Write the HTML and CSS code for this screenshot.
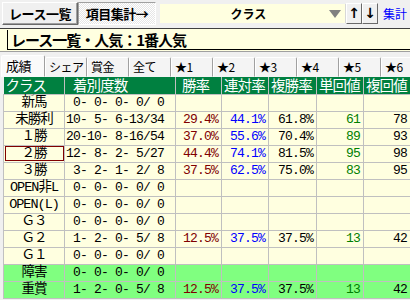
FILE: index.html
```html
<!DOCTYPE html>
<html lang="ja">
<head>
    <meta charset="UTF-8">
    <title>レース一覧</title>
    <link rel="stylesheet" href="styles.css">
</head>
<body>
    <div class="toolbar">
        <button class="btn">レース一覧</button>
        <button class="btn pressed">項目集計→</button>
        <div class="combo">
            <span class="combo-text">クラス</span>
            <svg class="combo-arrow" width="12" height="8" viewBox="0 0 12 8"><path d="M0 0H12L6 8Z" fill="#808080"/></svg>
        </div>
        <button class="arrow">↑</button>
        <button class="arrow">↓</button>
        <span class="link">集計</span>
    </div>

    <div class="title">
        <span class="title-box">レース一覧・人気：1番人気</span>
    </div>

    <div class="tabs">
        <div class="tab active">成績</div>
        <div class="tab">シェア</div>
        <div class="tab">賞金</div>
        <div class="tab">全て</div>
        <div class="tab">★1</div>
        <div class="tab">★2</div>
        <div class="tab">★3</div>
        <div class="tab">★4</div>
        <div class="tab">★5</div>
        <div class="tab">★6</div>
    </div>

    <table class="grid">
        <colgroup>
            <col style="width:61px"><col style="width:111px"><col style="width:46px"><col style="width:47px"><col style="width:48px"><col style="width:47px"><col style="width:47px">
        </colgroup>
        <thead>
            <tr>
                <th>クラス</th>
                <th class="ind8">着別度数</th>
                <th class="ind6">勝率</th>
                <th>連対率</th>
                <th>複勝率</th>
                <th>単回値</th>
                <th>複回値</th>
            </tr>
        </thead>
        <tbody>
            <tr><td class="cls">新馬</td><td class="cnt"> 0- 0- 0- 0/ 0</td><td></td><td></td><td></td><td></td><td></td></tr>
            <tr><td class="cls">未勝利</td><td class="cnt">10- 5- 6-13/34</td><td class="win">29.4%</td><td class="ren">44.1%</td><td class="num">61.8%</td><td class="tan">61</td><td class="num">78</td></tr>
            <tr><td class="cls">１勝</td><td class="cnt">20-10- 8-16/54</td><td class="win">37.0%</td><td class="ren">55.6%</td><td class="num">70.4%</td><td class="tan">89</td><td class="num">93</td></tr>
            <tr><td class="cls sel">２勝</td><td class="cnt">12- 8- 2- 5/27</td><td class="win">44.4%</td><td class="ren">74.1%</td><td class="num">81.5%</td><td class="tan">95</td><td class="num">98</td></tr>
            <tr><td class="cls">３勝</td><td class="cnt"> 3- 2- 1- 2/ 8</td><td class="win">37.5%</td><td class="ren">62.5%</td><td class="num">75.0%</td><td class="tan">83</td><td class="num">95</td></tr>
            <tr><td class="cls">OPEN非L</td><td class="cnt"> 0- 0- 0- 0/ 0</td><td></td><td></td><td></td><td></td><td></td></tr>
            <tr><td class="cls">OPEN(L)</td><td class="cnt"> 0- 0- 0- 0/ 0</td><td></td><td></td><td></td><td></td><td></td></tr>
            <tr><td class="cls">Ｇ３</td><td class="cnt"> 0- 0- 0- 0/ 0</td><td></td><td></td><td></td><td></td><td></td></tr>
            <tr><td class="cls">Ｇ２</td><td class="cnt"> 1- 2- 0- 5/ 8</td><td class="win">12.5%</td><td class="ren">37.5%</td><td class="num">37.5%</td><td class="tan">13</td><td class="num">42</td></tr>
            <tr><td class="cls">Ｇ１</td><td class="cnt"> 0- 0- 0- 0/ 0</td><td></td><td></td><td></td><td></td><td></td></tr>
            <tr class="green"><td class="cls">障害</td><td class="cnt"> 0- 0- 0- 0/ 0</td><td></td><td></td><td></td><td></td><td></td></tr>
            <tr class="green"><td class="cls">重賞</td><td class="cnt"> 1- 2- 0- 5/ 8</td><td class="win">12.5%</td><td class="ren">37.5%</td><td class="num">37.5%</td><td class="tan">13</td><td class="num">42</td></tr>
        </tbody>
    </table>
</body>
</html>
```

FILE: styles.css
```css
/* Reset */
* {
    box-sizing: border-box;
    margin: 0;
    padding: 0;
}

body {
    width: 410px;
    height: 300px;
    overflow: hidden;
    background-color: #f0f0f0;
    font-family: "Liberation Mono", "Noto Sans CJK JP", monospace;
    color: #000;
}

/* Toolbar */
.toolbar {
    display: flex;
    align-items: center;
    height: 27px;
    padding-left: 2px;
}

.btn {
    height: 23px;
    width: 76px;
    font-family: "Noto Sans CJK JP", sans-serif;
    font-size: 13px;
    font-weight: bold;
    line-height: 19px;
    background-color: #f0f0f0;
    border: 1px solid;
    border-color: #fff #696969 #696969 #fff;
    box-shadow: inset -1px -1px 0 #a0a0a0;
    letter-spacing: -0.5px;
}

.btn.pressed {
    width: 78px;
    background-color: #fff;
    background-image: repeating-conic-gradient(#e6e6e6 0 25%, #fff 0 50%);
    background-size: 2px 2px;
    border-color: #a0a0a0 #fff #fff #a0a0a0;
    box-shadow: none;
}

.combo {
    display: flex;
    align-items: center;
    width: 186px;
    height: 19px;
    margin-left: 4px;
    background-color: #ffffe0;
    border-right: 1px solid #d8d8d8;
}

.combo-text {
    flex: 1;
    text-align: center;
    font-family: "Noto Sans CJK JP", sans-serif;
    font-size: 12px;
    font-weight: bold;
    padding-left: 8px;
}

.combo-arrow {
    margin-right: 4px;
}

.arrow {
    width: 16px;
    height: 21px;
    font-family: "DejaVu Sans", sans-serif;
    font-size: 14px;
    font-weight: bold;
    line-height: 17px;
    background-color: #f0f0f0;
    border: 1px solid;
    border-color: #fff #696969 #696969 #fff;
}

.arrow:first-of-type {
    margin-left: 5px;
}

.link {
    margin-left: 5px;
    font-family: "Noto Sans CJK JP", sans-serif;
    font-size: 12px;
    color: #0000ff;
    white-space: nowrap;
}

/* Title line */
.title {
    height: 24px;
    margin-top: 1px;
    padding: 1px 0 0 7px;
    background-color: #ffffe0;
    border-top: 1px solid #404040;
    border-bottom: 1px solid #a0a0a0;
}

.title-box {
    display: block;
    height: 20px;
    padding-left: 3px;
    border-left: 1px solid #000;
    border-bottom: 1px solid #000;
    font-family: "Noto Sans CJK JP", sans-serif;
    font-size: 15px;
    font-weight: bold;
    line-height: 19px;
    letter-spacing: -1px;
    white-space: nowrap;
}

/* Tabs */
.tabs {
    display: flex;
    align-items: flex-end;
    height: 25px;
    padding-left: 1px;
}

.tab {
    flex: none;
    width: 42px;
    height: 20px;
    padding-left: 3px;
    font-family: "Noto Sans CJK JP", "DejaVu Sans", sans-serif;
    font-size: 12px;
    line-height: 18px;
    letter-spacing: -0.5px;
    background-color: #f4f4f4;
    border: 1px solid;
    border-color: #fff #a0a0a0 transparent #fff;
    border-radius: 2px 2px 0 0;
    white-space: nowrap;
    overflow: hidden;
}

.tab.active {
    width: 44px;
    height: 22px;
    padding-left: 4px;
    font-size: 13px;
    line-height: 19px;
    background-color: #fafafa;
}

/* Grid */
.grid {
    table-layout: fixed;
    width: 407px;
    margin-left: 3px;
    border-collapse: collapse;
}

.grid th {
    height: 17px;
    padding: 0 0 0 2px;
    background-color: #008040;
    color: #fff;
    font-family: "Noto Sans CJK JP", sans-serif;
    font-size: 14.5px;
    font-weight: normal;
    line-height: 16px;
    letter-spacing: -0.9px;
    text-align: left;
    white-space: nowrap;
    border-right: 1px solid #c0c0c0;
}

.grid th.ind8 {
    padding-left: 8px;
}

.grid th.ind6 {
    padding-left: 6px;
}

.grid td {
    height: 17px;
    padding: 0 3px 0 0;
    background-color: #ffffe0;
    border: 1px solid #c0c0c0;
    font-size: 13px;
    line-height: 16px;
    letter-spacing: -0.8px;
    text-align: right;
    white-space: pre;
    overflow: hidden;
}

.grid tr.green td {
    background-color: #80ff80;
}

.grid td.cls {
    text-align: center;
    padding: 0;
    font-size: 13.5px;
    letter-spacing: -1px;
    overflow: visible;
}

.grid td.sel {
    outline: 1px solid #800000;
    outline-offset: -2px;
}

.grid td.cnt {
    text-align: left;
    padding-left: 1px;
}

.win {
    color: #800000;
}

.ren {
    color: #0000ff;
}

.tan {
    color: #008000;
}
```
